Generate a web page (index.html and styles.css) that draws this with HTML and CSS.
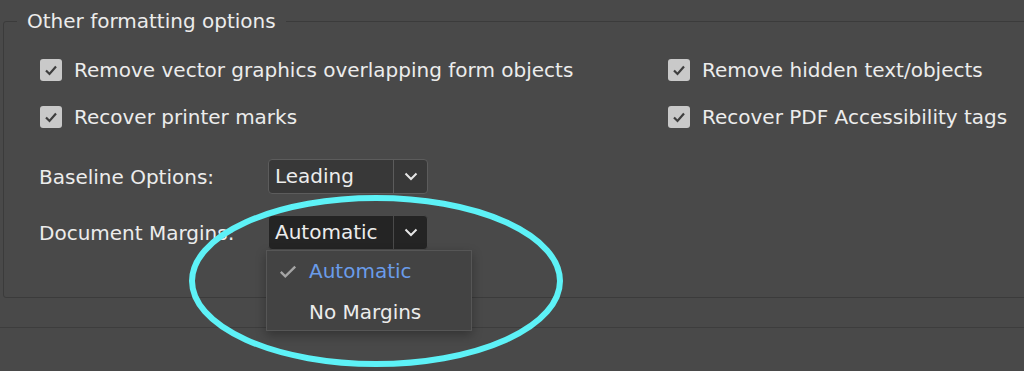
FILE: index.html
```html
<!DOCTYPE html>
<html lang="en">
<head>
    <meta charset="UTF-8">
    <title>Other formatting options</title>
    <link rel="stylesheet" href="styles.css">
</head>
<body>
    <fieldset class="group">
        <legend>Other formatting options</legend>
        <div class="checks">
            <label class="check"><span class="box"><svg viewBox="0 0 22 22"><path d="M6 11.5l3.5 3.5 6.5-7.5"/></svg></span>Remove vector graphics overlapping form objects</label>
            <label class="check"><span class="box"><svg viewBox="0 0 22 22"><path d="M6 11.5l3.5 3.5 6.5-7.5"/></svg></span>Remove hidden text/objects</label>
            <label class="check"><span class="box"><svg viewBox="0 0 22 22"><path d="M6 11.5l3.5 3.5 6.5-7.5"/></svg></span>Recover printer marks</label>
            <label class="check"><span class="box"><svg viewBox="0 0 22 22"><path d="M6 11.5l3.5 3.5 6.5-7.5"/></svg></span>Recover PDF Accessibility tags</label>
        </div>
        <div class="fields">
            <span class="field-label">Baseline Options:</span>
            <div class="select">
                <span class="value">Leading</span>
                <span class="arrow"><svg viewBox="0 0 14 9"><path d="M1.5 1.5l5.5 5.5 5.5-5.5"/></svg></span>
            </div>
            <span class="field-label">Document Margins:</span>
            <div class="select open">
                <span class="value">Automatic</span>
                <span class="arrow"><svg viewBox="0 0 14 9"><path d="M1.5 1.5l5.5 5.5 5.5-5.5"/></svg></span>
                <ul class="menu">
                    <li class="selected"><span class="tick"><svg viewBox="0 0 20 16"><path d="M2 8.5l5 5 11-11"/></svg></span>Automatic</li>
                    <li><span class="tick"></span>No Margins</li>
                </ul>
            </div>
        </div>
    </fieldset>
    <div class="footer"></div>
    <svg class="ring" viewBox="0 0 1024 371" width="1024" height="371">
        <ellipse cx="376" cy="281" rx="184" ry="83"/>
    </svg>
</body>
</html>
```

FILE: styles.css
```css
body {
    margin: 0;
    background-color: #494949;
    font-family: "DejaVu Sans", sans-serif;
    color: #ececec;
    overflow: hidden;
    width: 1024px;
    height: 371px;
    position: relative;
}
.group {
    margin: 10px -20px 0 3px;
    padding: 0 0 0 36px;
    border: 1px solid #3b3b3b;
    border-radius: 3px;
    height: 288px;
    box-sizing: border-box;
}
.group legend {
    font-size: 20px;
    padding: 0 10px 0 10px;
    margin-left: -23px;
    line-height: 22px;
}
.checks {
    display: grid;
    grid-template-columns: 628px auto;
    row-gap: 24px;
    margin-top: 26px;
}
.check {
    display: flex;
    align-items: center;
    gap: 12px;
    font-size: 20px;
    height: 23px;
}
.box {
    width: 22px;
    height: 22px;
    background-color: #c9c9c9;
    border-radius: 3px;
    display: flex;
}
.box svg {
    width: 22px;
    height: 22px;
    fill: none;
    stroke: #3e3e3e;
    stroke-width: 2.2;
}
.fields {
    display: grid;
    grid-template-columns: 229px 160px;
    row-gap: 21px;
    align-items: center;
    margin-top: 31px;
    margin-left: -1px;
}
.field-label {
    font-size: 20px;
}
.select {
    position: relative;
    display: flex;
    height: 35px;
    border: 1px solid #5c5c5c;
    border-radius: 4px;
    background-color: #383838;
    box-sizing: border-box;
}
.select.open {
    background-color: #242424;
    border-color: #4a4a4a;
}
.select .value {
    flex: 1;
    padding-left: 6px;
    font-size: 20px;
    line-height: 33px;
}
.select .arrow {
    width: 33px;
    border-left: 1px solid #5c5c5c;
    display: flex;
    align-items: center;
    justify-content: center;
}
.select.open .arrow {
    border-left-color: #4a4a4a;
}
.arrow svg {
    width: 14px;
    height: 9px;
    fill: none;
    stroke: #e6e6e6;
    stroke-width: 2;
}
.menu {
    position: absolute;
    top: 34px;
    left: -3px;
    width: 204px;
    margin: 0;
    padding: 0;
    list-style: none;
    background-color: #434343;
    border: 1px solid #565656;
    box-shadow: 0 4px 10px rgba(0, 0, 0, 0.3);
    font-size: 20px;
}
.menu li {
    display: flex;
    align-items: center;
    height: 40px;
}
.menu li + li {
    height: 39px;
    padding-top: 2px;
    box-sizing: border-box;
}
.menu .tick {
    width: 42px;
    display: flex;
    align-items: center;
    padding-left: 12px;
    box-sizing: border-box;
}
.menu .tick svg {
    width: 18px;
    height: 15px;
    fill: none;
    stroke: #a5a5a5;
    stroke-width: 2.6;
}
.menu .selected {
    color: #6a9cea;
}
.footer {
    margin-top: 29px;
    border-top: 1px solid #3d3d3d;
}
.ring {
    position: absolute;
    top: 0;
    left: 0;
    pointer-events: none;
}
.ring ellipse {
    fill: none;
    stroke: #5df2f7;
    stroke-width: 6;
}
```
